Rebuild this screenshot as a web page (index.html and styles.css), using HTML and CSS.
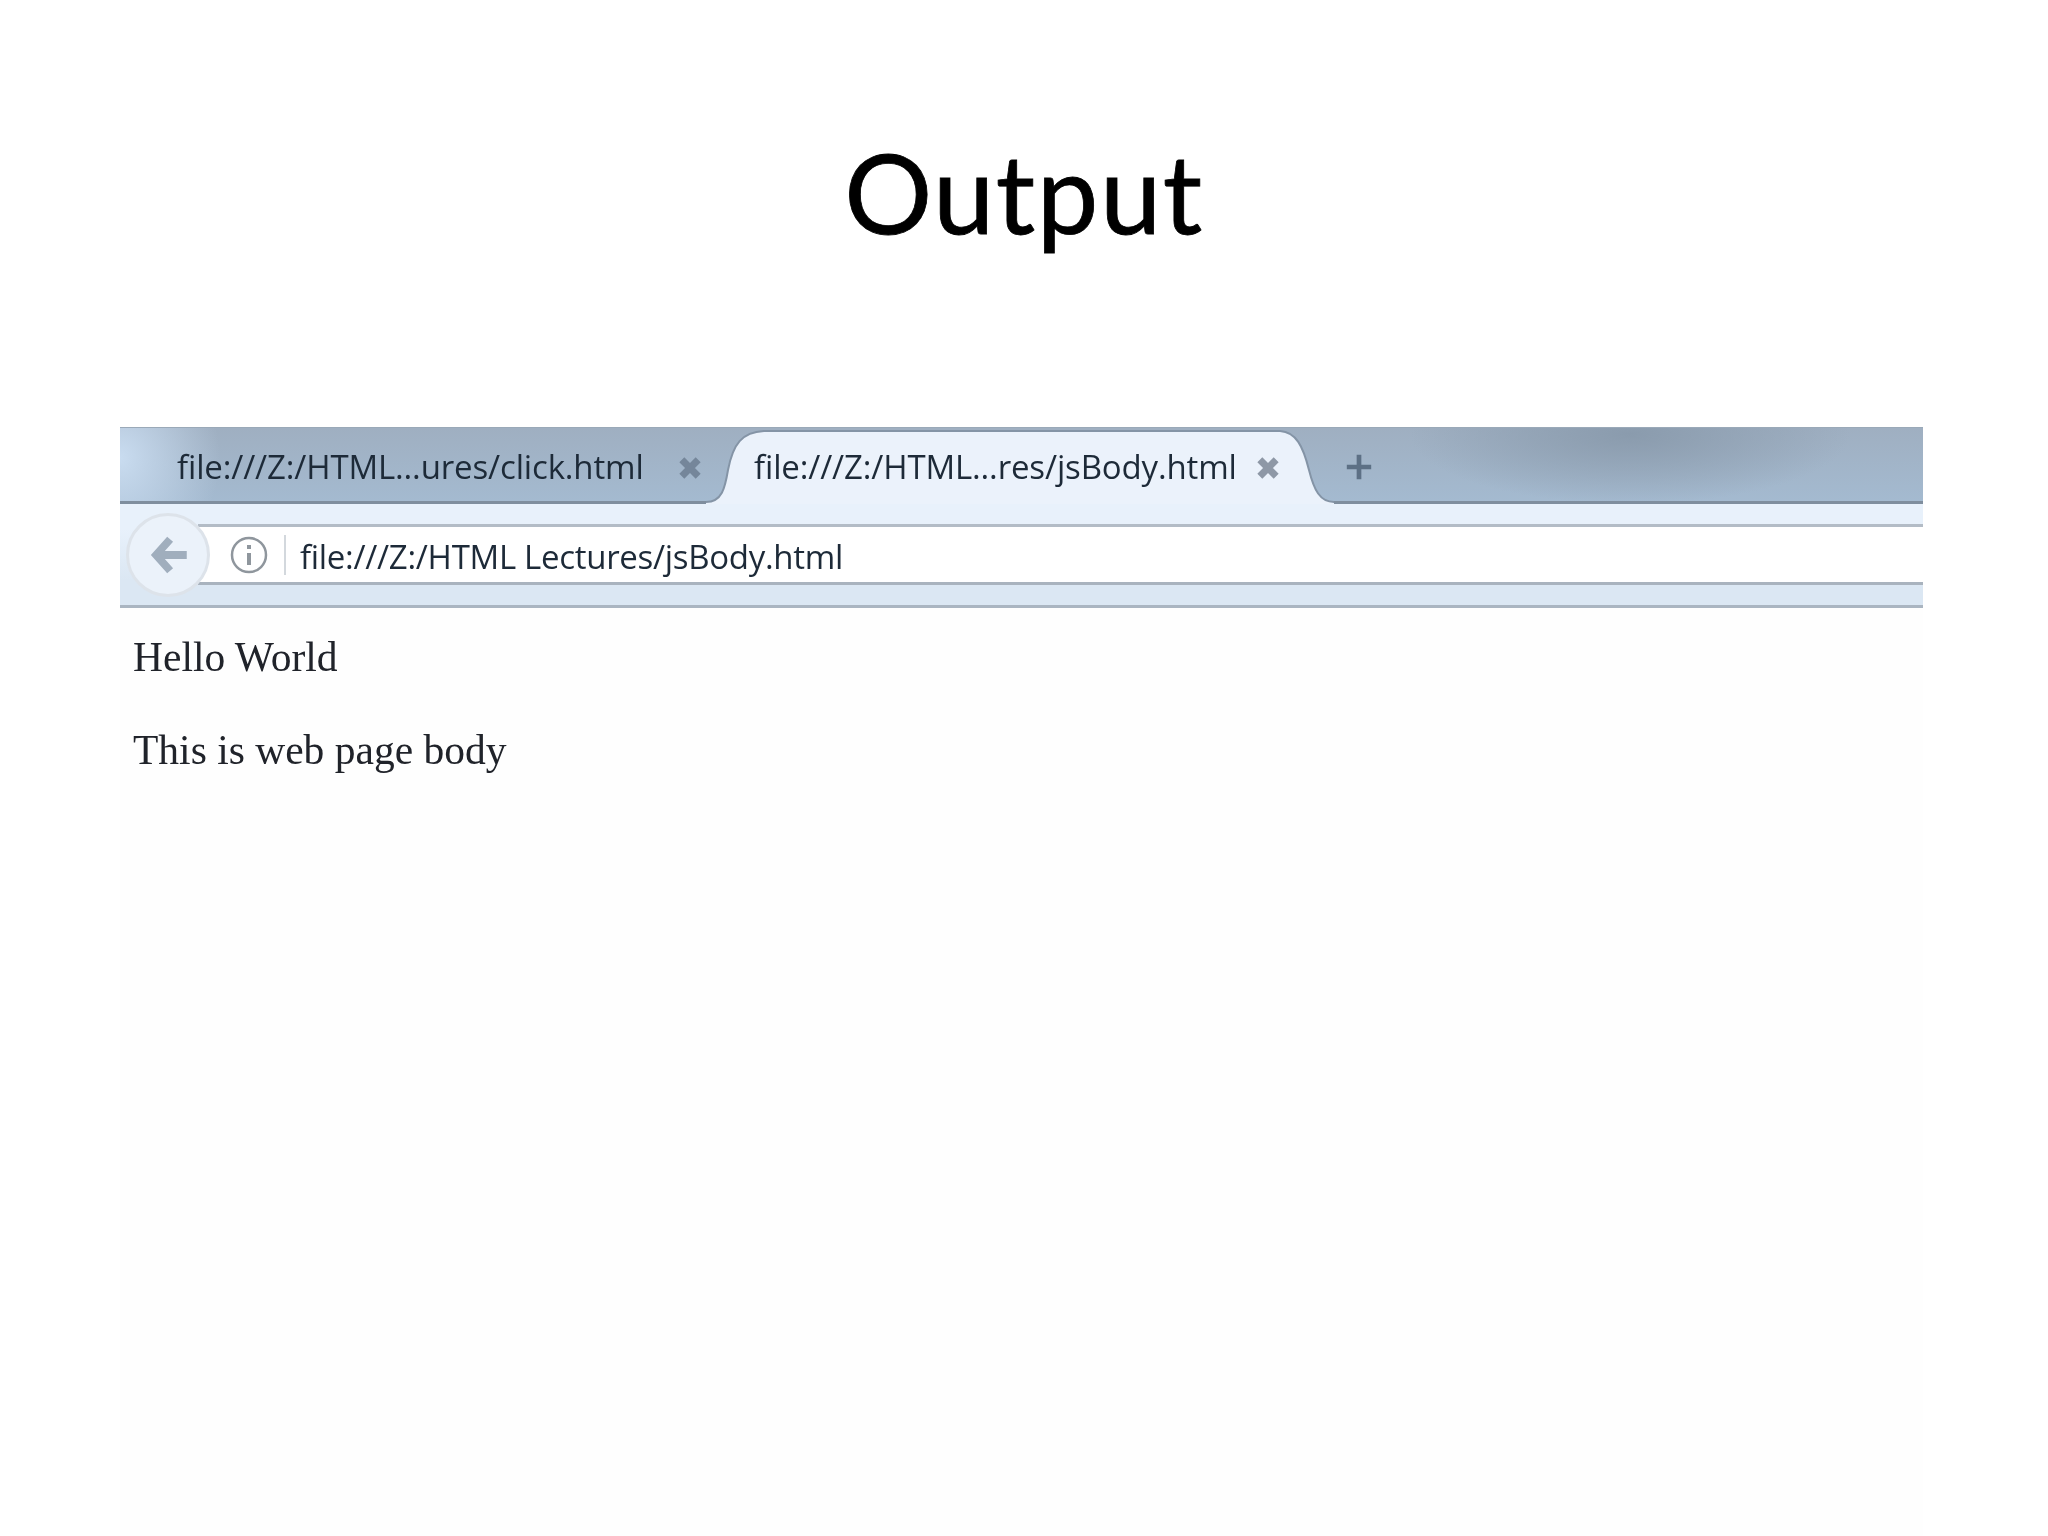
FILE: index.html
```html
<!DOCTYPE html>
<html lang="en">

<head>
    <meta charset="UTF-8">
    <title>Output</title>
    <link rel="stylesheet" href="styles.css">
</head>

<body>
    <h1 class="slide-title">Output</h1>

    <div class="browser">
        <div class="tab-bar">
            <div class="tab">
                <span class="tab-label">file:///Z:/HTML...ures/click.html</span>
                <svg class="tab-close" viewBox="0 0 24 24"><path d="M5 5L19 19M19 5L5 19" /></svg>
            </div>
            <div class="tab tab-active">
                <svg class="tab-shape" viewBox="0 0 640 76">
                    <path class="tab-fill" d="M6 76L6 74C22 74 25 60 28 42C33 16 42 4 64 3L580 3C596 4 603 18 609 42C614 62 620 74 634 74L634 76Z" />
                    <path class="tab-edge" d="M6 74C22 74 25 60 28 42C33 16 42 4 64 3L580 3C596 4 603 18 609 42C614 62 620 74 634 74" />
                </svg>
                <span class="tab-label">file:///Z:/HTML...res/jsBody.html</span>
                <svg class="tab-close" viewBox="0 0 24 24"><path d="M5 5L19 19M19 5L5 19" /></svg>
            </div>
            <svg class="tab-new" viewBox="0 0 32 32"><path d="M16 3V29M3 16H29" /></svg>
        </div>

        <div class="nav-bar">
            <div class="back-button">
                <svg viewBox="0 0 48 48"><path d="M23 6L7 24L23 42M10 24H42" /></svg>
            </div>
            <div class="address-box">
                <svg class="info-icon" viewBox="0 0 40 40">
                    <circle cx="20" cy="20" r="17" />
                    <path class="info-mark" d="M20 18V30M20 10V14" />
                </svg>
                <span class="address-text">file:///Z:/HTML Lectures/jsBody.html</span>
            </div>
        </div>

        <div class="page-body">
            <p>Hello World</p>
            <p>This is web page body</p>
        </div>
    </div>
</body>

</html>
```

FILE: styles.css
```css
body {
    margin: 0;
    height: 1536px;
    display: flex;
    flex-direction: column;
    background: #fff;
    overflow: hidden;
}

.slide-title {
    margin: 0;
    height: 427px;
    padding-top: 126px;
    box-sizing: border-box;
    text-align: center;
    font-family: Lato, sans-serif;
    font-size: 110px;
    font-weight: 400;
    letter-spacing: 1.5px;
    line-height: 130px;
    color: #000;
    -webkit-text-stroke: 0.8px #000;
}

.browser {
    margin-left: 120px;
    width: 1803px;
    flex: 1;
    display: flex;
    flex-direction: column;
    background: #fefefe;
    font-family: "Open Sans", sans-serif;
    color: #1d2a38;
}

/* tab strip */
.tab-bar {
    height: 73px;
    display: flex;
    align-items: center;
    border-bottom: 3px solid #7f8e9e;
    border-top: 1px solid #9aa9b8;
    background:
        radial-gradient(ellipse 220px 70px at 1510px 6px, #8a9bad, rgba(138, 155, 173, 0)),
        radial-gradient(ellipse 100px 110px at 0 30px, #c9dcf0, rgba(201, 220, 240, 0)),
        linear-gradient(#9fafc1, #a4bad0);
}

.tab {
    position: relative;
    display: flex;
    align-items: center;
    height: 100%;
    box-sizing: border-box;
    padding: 3px 0 0 57px;
    width: 600px;
}

.tab-label {
    position: relative;
    font-size: 33px;
    letter-spacing: -0.15px;
    white-space: nowrap;
    filter: blur(0.5px);
}

.tab-close {
    position: absolute;
    left: 556px;
    top: 26px;
    width: 28px;
    height: 28px;
    fill: none;
    stroke: #75869a;
    stroke-width: 6;
    filter: blur(0.6px);
}

.tab-active {
    padding-left: 34px;
    width: 624px;
}

.tab-active .tab-close {
    left: 534px;
    stroke: #8e98a6;
}

.tab-shape {
    position: absolute;
    left: -20px;
    top: 0;
    width: 640px;
    height: 76px;
}

.tab-fill {
    fill: #ebf2fb;
}

.tab-edge {
    fill: none;
    stroke: #8494a6;
    stroke-width: 2;
}

.tab-new {
    width: 30px;
    height: 30px;
    margin-top: 5px;
    fill: none;
    stroke: #5d7085;
    stroke-width: 5;
    filter: blur(0.6px);
}

/* back button and address bar */
.nav-bar {
    position: relative;
    height: 104px;
    box-sizing: border-box;
    padding: 20px 0 20px 78px;
    background: linear-gradient(#e8f1fb 25%, #dbe7f3 75%);
    border-bottom: 3px solid #aab5c1;
}

.address-box {
    height: 100%;
    box-sizing: border-box;
    display: flex;
    align-items: center;
    padding-left: 31px;
    background: #fff;
    border-top: 3px solid #b3bcc6;
    border-bottom: 3px solid #a9b3be;
}

.info-icon {
    width: 40px;
    height: 40px;
    fill: none;
    stroke: #8f969d;
    stroke-width: 2.5;
    padding-right: 15px;
    border-right: 2px solid #d3d8dd;
    margin-right: 14px;
}

.info-mark {
    stroke-width: 4;
}

.address-text {
    padding-top: 3px;
    font-size: 33px;
    letter-spacing: -0.3px;
    white-space: nowrap;
    filter: blur(0.5px);
}

.back-button {
    position: absolute;
    left: 6px;
    top: 9px;
    width: 84px;
    height: 84px;
    box-sizing: border-box;
    padding-left: 5px;
    border: 3px solid #dde3ea;
    border-radius: 50%;
    background: #ebf2fa;
    display: flex;
    align-items: center;
    justify-content: center;
}

.back-button svg {
    width: 42px;
    height: 42px;
    fill: none;
    stroke: #a0aebd;
    stroke-width: 9;
    filter: blur(0.6px);
}

/* page content */
.page-body {
    padding: 24px 0 0 13px;
    font-family: "Liberation Serif", serif;
    font-size: 41.5px;
    line-height: 50px;
    color: #20232a;
}

.page-body p {
    margin: 0 0 43px;
    filter: blur(0.4px);
}
```
